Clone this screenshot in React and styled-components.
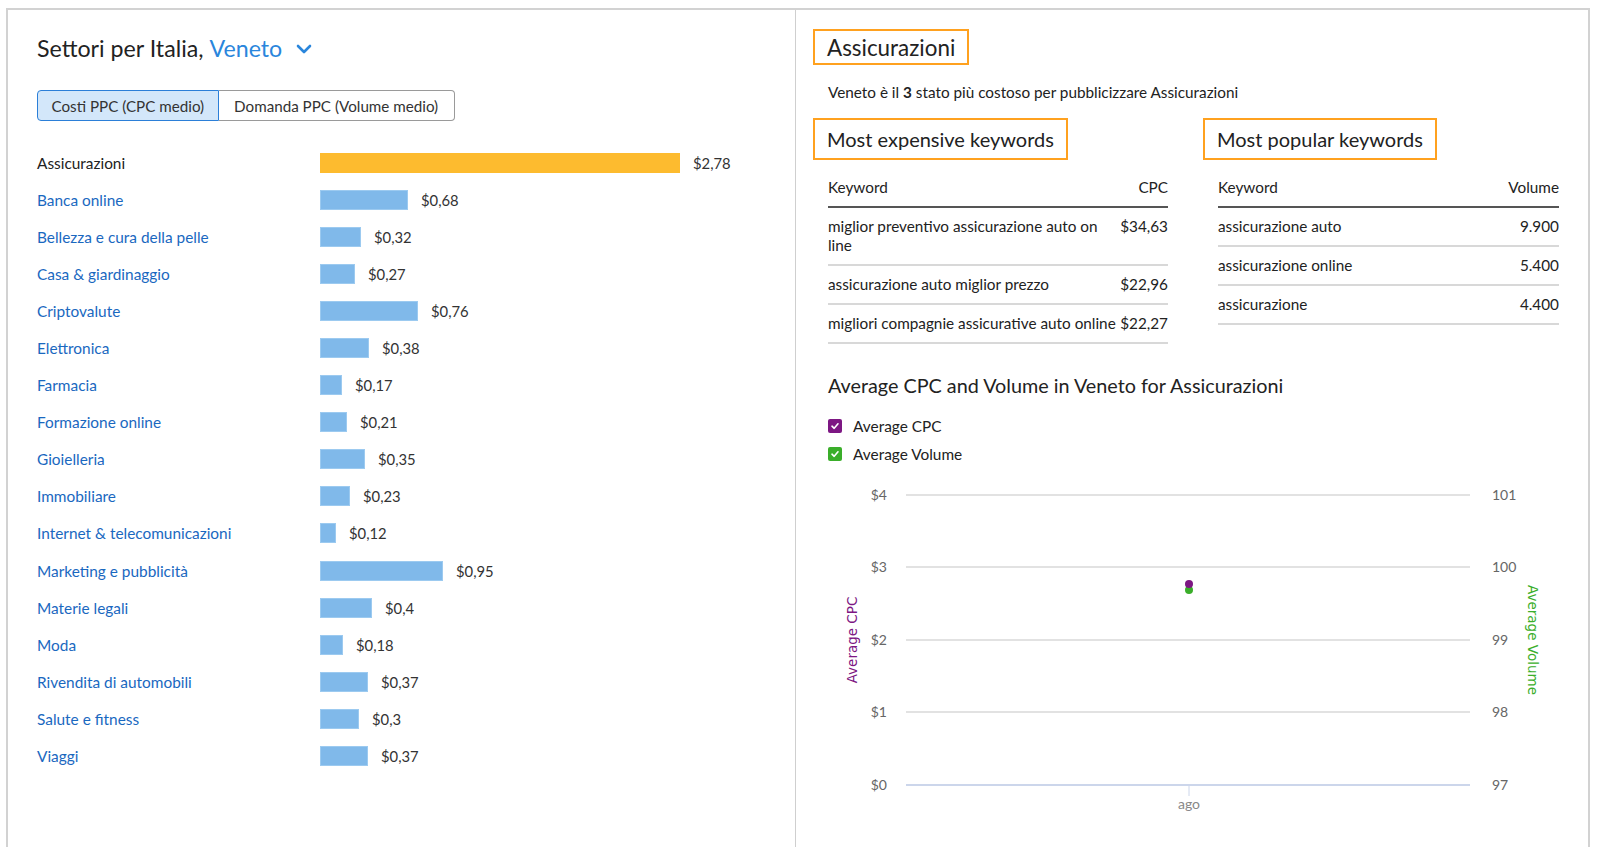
import React from "react";
import styled, { createGlobalStyle } from "styled-components";

const Global = createGlobalStyle`
  html, body { margin: 0; padding: 0; background: #fff; overflow: hidden; }
  body { font-family: Lato, "Noto Sans", sans-serif; color: #333; }
  * { box-sizing: border-box; }
`;

const Page = styled.div`
  padding: 8px 0 0 6px;
  height: 847px;
`;

const Card = styled.div`
  width: 1584px;
  height: 839px;
  border: 2px solid #d2d2d2;
  border-bottom: none;
  display: grid;
  grid-template-columns: 788px 1fr;
  overflow: hidden;
`;

const LeftPanel = styled.section`
  padding: 23px 0 0 29px;
  border-right: 1px solid #cfcfcf;
`;

const Title = styled.h2`
  margin: 0;
  font-size: 23.2px;
  font-weight: 400;
  line-height: 30px;
  color: #222;
  display: flex;
  align-items: center;
`;

const TitleLink = styled.span`
  color: #2a86dc;
  margin-left: 6px;
`;

const Chevron = styled.svg`
  margin-left: 14px;
  margin-top: 2px;
`;

const Toggle = styled.div`
  display: flex;
  margin-top: 27px;
  width: max-content;
`;

const ToggleBtn = styled.button`
  font-family: inherit;
  font-size: 15.2px;
  color: #333;
  height: 31px;
  padding: 0 ${(p) => (p.$active ? 13.5 : 15.5)}px;
  background: ${(p) => (p.$active ? "#d3e7fa" : "#fff")};
  border: 1px solid ${(p) => (p.$active ? "#2b7fd8" : "#9a9a9a")};
  border-left-width: ${(p) => (p.$active ? 1 : 0)}px;
  border-radius: ${(p) => (p.$active ? "4px 0 0 4px" : "0 4px 4px 0")};
  cursor: pointer;
`;

const Rows = styled.div`
  margin-top: 23px;
  display: flex;
  flex-direction: column;
`;

const Row = styled.div`
  display: grid;
  grid-template-columns: 283px 1fr;
  align-items: center;
  height: 37.1px;
`;

const Label = styled.span`
  font-size: 15.4px;
  color: ${(p) => (p.$current ? "#222" : "#1a68bf")};
`;

const BarCell = styled.div`
  display: flex;
  align-items: center;
`;

const Bar = styled.div`
  height: 20px;
  background: ${(p) => (p.$current ? "#fdbb2f" : "#80b9ea")};
  border: 1px solid ${(p) => (p.$current ? "#fdbb2f" : "#9ccaf0")};
`;

const Value = styled.span`
  margin-left: 13px;
  font-size: 14.8px;
  color: #333;
`;

const RightPanel = styled.section`
  padding: 19px 0 0 32px;
  display: flex;
  flex-direction: column;
`;

const Highlight = styled.div`
  border: 2px solid #ffa11f;
  margin-left: ${(p) => p.$ml ?? -15}px;
  padding: 0 ${(p) => p.$px ?? 13}px;
  height: ${(p) => p.$h ?? 36}px;
  width: max-content;
  display: flex;
  align-items: center;
  font-size: ${(p) => p.$fs ?? 20}px;
  color: #222;
`;

const Subtitle = styled.p`
  margin: 17px 0 0;
  font-size: 15.3px;
  line-height: 20px;
  color: #222;
`;

const Columns = styled.div`
  display: grid;
  grid-template-columns: 340px 341px;
  column-gap: 50px;
  margin-top: 16px;
`;

const Table = styled.table`
  border-collapse: collapse;
  width: 100%;
  margin-top: 10px;
  font-size: 15.3px;
  color: #222;
`;

const Th = styled.th`
  font-weight: 400;
  text-align: ${(p) => (p.$right ? "right" : "left")};
  padding: 8px 0 9px;
  line-height: 19px;
  border-bottom: 2px solid #555;
`;

const Td = styled.td`
  text-align: ${(p) => (p.$right ? "right" : "left")};
  vertical-align: top;
  padding: 9px 0 9px;
  line-height: 19px;
  border-bottom: 2px solid #d8d8d8;
  white-space: ${(p) => (p.$right ? "nowrap" : "normal")};
  padding-left: ${(p) => (p.$right ? 4 : 0)}px;
`;

const ChartTitle = styled.h3`
  margin: 28px 0 0;
  font-size: 19.8px;
  font-weight: 400;
  line-height: 26px;
  color: #222;
`;

const Legend = styled.div`
  margin-top: 19px;
  display: flex;
  flex-direction: column;
  gap: 10px;
`;

const LegendItem = styled.label`
  display: flex;
  align-items: center;
  gap: 11px;
  font-size: 15.4px;
  line-height: 18px;
  color: #222;
`;

const Check = styled.span`
  width: 14px;
  height: 14px;
  border-radius: 2px;
  background: ${(p) => p.$color};
  display: inline-flex;
  align-items: center;
  justify-content: center;
`;

const ChartSvg = styled.svg`
  margin-top: 6px;
  display: block;
  overflow: visible;
`;

const sectors = [
  ["Assicurazioni", 2.78],
  ["Banca online", 0.68],
  ["Bellezza e cura della pelle", 0.32],
  ["Casa & giardinaggio", 0.27],
  ["Criptovalute", 0.76],
  ["Elettronica", 0.38],
  ["Farmacia", 0.17],
  ["Formazione online", 0.21],
  ["Gioielleria", 0.35],
  ["Immobiliare", 0.23],
  ["Internet & telecomunicazioni", 0.12],
  ["Marketing e pubblicità", 0.95],
  ["Materie legali", 0.4],
  ["Moda", 0.18],
  ["Rivendita di automobili", 0.37],
  ["Salute e fitness", 0.3],
  ["Viaggi", 0.37],
];

const fmt = (v) => "$" + String(v).replace(".", ",");

const expensive = [
  ["miglior preventivo assicurazione auto on line", "$34,63"],
  ["assicurazione auto miglior prezzo", "$22,96"],
  ["migliori compagnie assicurative auto online", "$22,27"],
];

const popular = [
  ["assicurazione auto", "9.900"],
  ["assicurazione online", "5.400"],
  ["assicurazione", "4.400"],
];

const CheckMark = () => (
  <svg width="10" height="10" viewBox="0 0 10 10">
    <polyline points="2,5.2 4.2,7.3 8,2.8" fill="none" stroke="#fff" strokeWidth="1.6" strokeLinecap="round" strokeLinejoin="round" />
  </svg>
);

const Chart = () => {
  const ys = [26, 98, 171, 243, 316];
  const left = ["$4", "$3", "$2", "$1", "$0"];
  const right = ["101", "100", "99", "98", "97"];
  return (
    <ChartSvg width="733" height="345" viewBox="0 0 733 345">
      {ys.map((y, i) => (
        <g key={y}>
          <line x1="78" x2="642" y1={y} y2={y} stroke={i === 4 ? "#ccd6eb" : "#e2e2e2"} strokeWidth="2" />
          <text x="59" y={y + 5} textAnchor="end" fontSize="14" fill="#666" fontFamily="Lato, sans-serif">{left[i]}</text>
          <text x="664" y={y + 5} textAnchor="start" fontSize="14" fill="#666" fontFamily="Lato, sans-serif">{right[i]}</text>
        </g>
      ))}
      <line x1="361" x2="361" y1="317" y2="327" stroke="#ccd6eb" strokeWidth="1" />
      <text x="361" y="340" textAnchor="middle" fontSize="14" fill="#888" fontFamily="Lato, sans-serif">ago</text>
      <text transform="translate(29 171) rotate(-90)" textAnchor="middle" fontSize="13.5" fill="#7d1783" fontFamily="DejaVu Sans, sans-serif">Average CPC</text>
      <text transform="translate(700 171) rotate(90)" textAnchor="middle" fontSize="13.5" fill="#3aae2a" fontFamily="DejaVu Sans, sans-serif">Average Volume</text>
      <circle cx="361" cy="121" r="4" fill="#3aae2a" />
      <circle cx="361" cy="115" r="4" fill="#7d1783" />
    </ChartSvg>
  );
};

export default function App() {
  return (
    <>
      <Global />
      <Page>
        <Card>
          <LeftPanel>
            <Title>
              Settori per Italia,<TitleLink>Veneto</TitleLink>
              <Chevron width="16" height="10" viewBox="0 0 16 10">
                <polyline points="2,2 8,8 14,2" fill="none" stroke="#2a86dc" strokeWidth="2.6" strokeLinecap="round" strokeLinejoin="round" />
              </Chevron>
            </Title>
            <Toggle>
              <ToggleBtn $active>Costi PPC (CPC medio)</ToggleBtn>
              <ToggleBtn>Domanda PPC (Volume medio)</ToggleBtn>
            </Toggle>
            <Rows>
              {sectors.map(([name, v], i) => (
                <Row key={name}>
                  <Label $current={i === 0}>{name}</Label>
                  <BarCell>
                    <Bar $current={i === 0} style={{ width: Math.round(v * 129.5) + "px" }} />
                    <Value>{fmt(v)}</Value>
                  </BarCell>
                </Row>
              ))}
            </Rows>
          </LeftPanel>
          <RightPanel>
            <Highlight $h={36} $fs={22.4} $px={12}>Assicurazioni</Highlight>
            <Subtitle>
              Veneto è il <b>3</b> stato più costoso per pubblicizzare Assicurazioni
            </Subtitle>
            <Columns>
              <div>
                <Highlight $ml={-15} $px={12} $h={42} $fs={20}>Most expensive keywords</Highlight>
                <Table>
                  <thead>
                    <tr><Th>Keyword</Th><Th $right>CPC</Th></tr>
                  </thead>
                  <tbody>
                    {expensive.map(([k, v]) => (
                      <tr key={k}><Td>{k}</Td><Td $right>{v}</Td></tr>
                    ))}
                  </tbody>
                </Table>
              </div>
              <div>
                <Highlight $ml={-15} $px={12} $h={42} $fs={20}>Most popular keywords</Highlight>
                <Table>
                  <thead>
                    <tr><Th>Keyword</Th><Th $right>Volume</Th></tr>
                  </thead>
                  <tbody>
                    {popular.map(([k, v]) => (
                      <tr key={k}><Td>{k}</Td><Td $right>{v}</Td></tr>
                    ))}
                  </tbody>
                </Table>
              </div>
            </Columns>
            <ChartTitle>Average CPC and Volume in Veneto for Assicurazioni</ChartTitle>
            <Legend>
              <LegendItem><Check $color="#7d1783"><CheckMark /></Check>Average CPC</LegendItem>
              <LegendItem><Check $color="#3aae2a"><CheckMark /></Check>Average Volume</LegendItem>
            </Legend>
            <Chart />
          </RightPanel>
        </Card>
      </Page>
    </>
  );
}
